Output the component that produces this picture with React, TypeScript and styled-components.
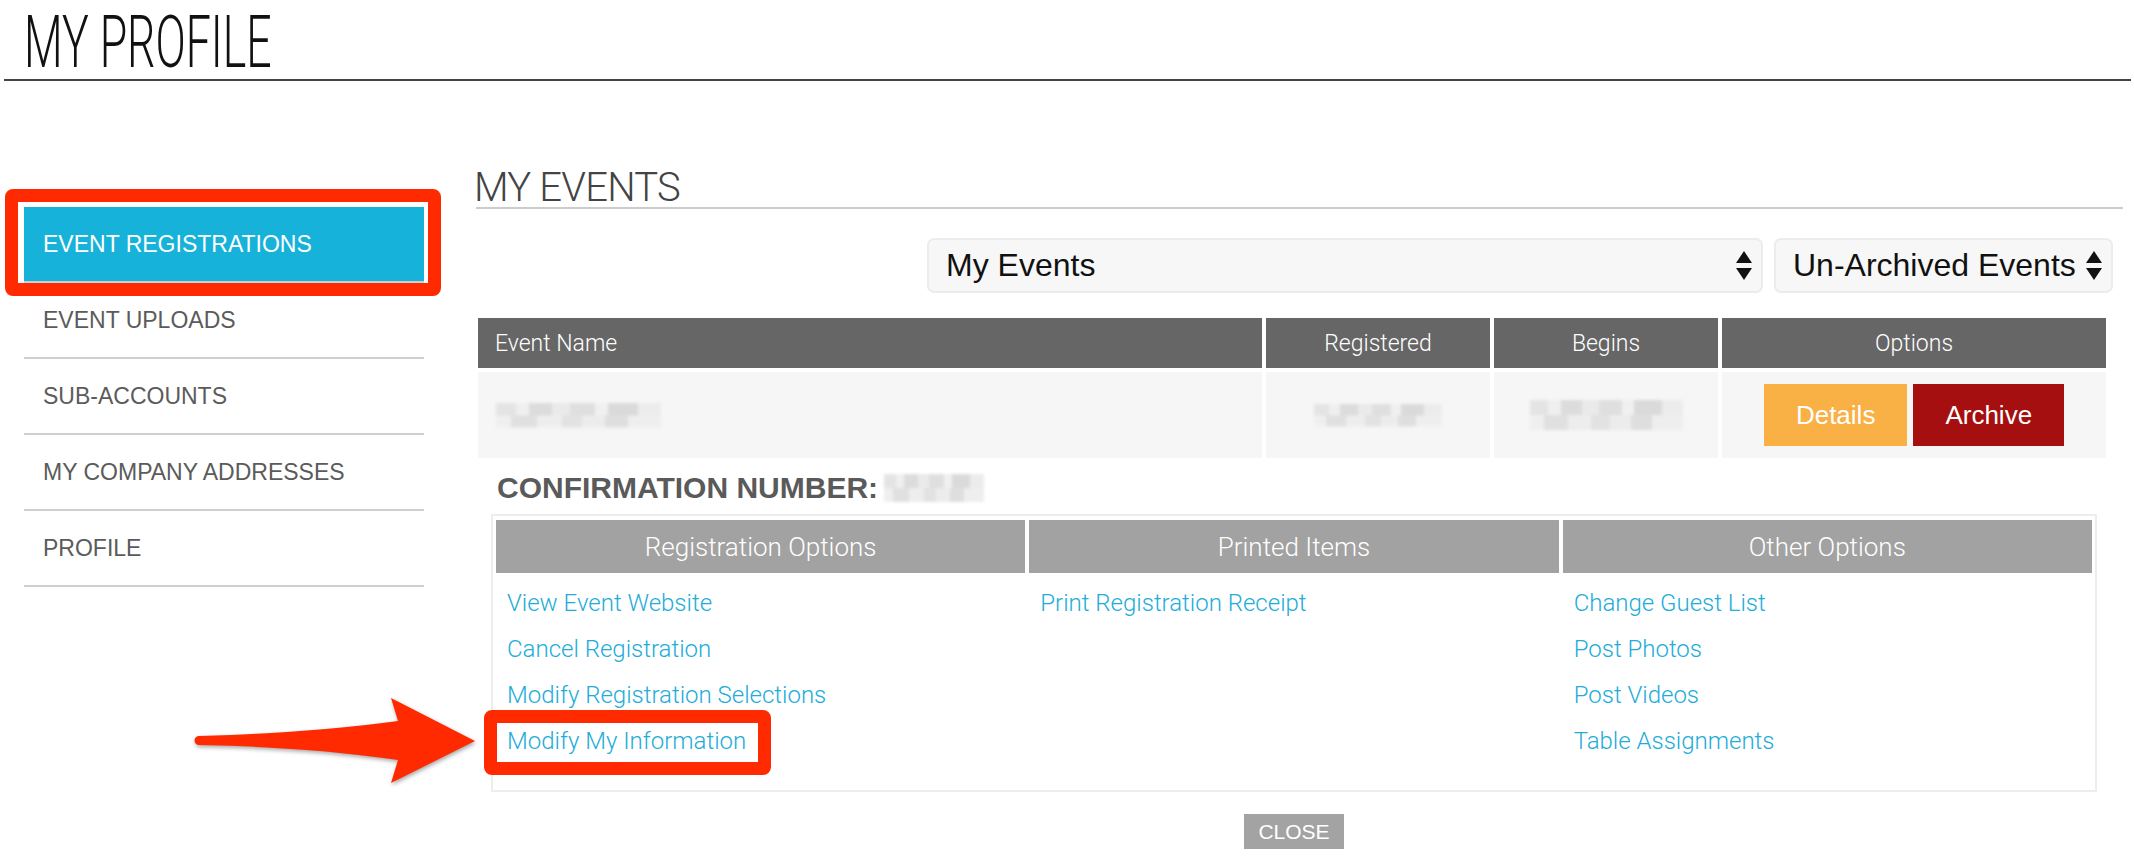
import React from "react";
import styled, { createGlobalStyle } from "styled-components";

const GlobalStyle = createGlobalStyle`
  html, body {
    margin: 0;
    padding: 0;
    background: #fff;
  }
  body {
    font-family: "Liberation Sans", Arial, sans-serif;
    color: #333;
  }
  * {
    box-sizing: border-box;
  }
`;

const Page = styled.div`
  position: relative;
  width: 2134px;
  min-height: 860px;
  overflow: hidden;
`;

const PageTitle = styled.h1`
  margin: 0 3px 0 4px;
  height: 81px;
  padding: 7px 0 0 20px;
  border-bottom: 2px solid #444;
  font-family: Roboto, "Liberation Sans", sans-serif;
  font-weight: 300;
  font-size: 72px;
  line-height: 72px;
  color: #111;
  white-space: nowrap;
`;

const TitleText = styled.span`
  display: inline-block;
  transform: scaleX(0.62);
  transform-origin: left center;
`;

const Layout = styled.div`
  display: flex;
  align-items: flex-start;
  padding-left: 24px;
`;

const Sidebar = styled.nav`
  flex-shrink: 0;
  width: 400px;
  margin-top: 126px;
`;

const MenuItem = styled.div<{ $active?: boolean }>`
  position: relative;
  display: flex;
  align-items: center;
  height: 76px;
  padding-left: 19px;
  border-bottom: 2px solid #cfcfcf;
  background: ${(p) => (p.$active ? "#16b2d9" : "transparent")};
  color: ${(p) => (p.$active ? "#fff" : "#5b5b5b")};
  font-size: 23px;
  text-transform: uppercase;
  white-space: nowrap;
`;

// red annotation frame drawn over an element
const Callout = styled.span<{ $inset: string }>`
  position: absolute;
  inset: ${(p) => p.$inset};
  border: 13px solid #ff2a00;
  border-radius: 8px;
  pointer-events: none;
`;

const Main = styled.main`
  width: 1647px;
  margin-left: 52px;
`;

const SectionTitle = styled.h2`
  margin: 88px 0 0;
  padding-left: 0;
  border-bottom: 2px solid #cccccc;
  font-family: Roboto, "Liberation Sans", sans-serif;
  font-weight: 300;
  font-size: 40px;
  line-height: 38px;
  letter-spacing: -0.8px;
  color: #444;
  text-indent: -2px;
`;

const Filters = styled.div`
  display: flex;
  justify-content: flex-end;
  gap: 11px;
  margin-top: 29px;
  padding-right: 10px;
`;

const SelectBox = styled.div<{ $width: number }>`
  display: flex;
  align-items: center;
  justify-content: space-between;
  width: ${(p) => p.$width}px;
  height: 55px;
  padding: 0 9px 0 17px;
  background: #f7f7f7;
  border: 2px solid #ececec;
  border-radius: 7px;
  font-size: 32px;
  color: #111;
  white-space: nowrap;
`;

const EventTable = styled.div`
  display: grid;
  grid-template-columns: 784px 224px 224px 384px;
  gap: 4px;
  margin: 25px 0 0 2px;
`;

const HeadCell = styled.div<{ $center?: boolean }>`
  display: flex;
  align-items: center;
  justify-content: ${(p) => (p.$center ? "center" : "flex-start")};
  height: 50px;
  padding-left: ${(p) => (p.$center ? 0 : 17)}px;
  background: #666666;
  color: #fff;
  font-family: Roboto, "Liberation Sans", sans-serif;
  font-weight: 300;
  font-size: 23px;
`;

const BodyCell = styled.div<{ $center?: boolean }>`
  display: flex;
  align-items: center;
  justify-content: ${(p) => (p.$center ? "center" : "flex-start")};
  gap: 6px;
  height: 86px;
  padding-left: ${(p) => (p.$center ? 0 : 18)}px;
  background: #f6f6f6;
`;

const ActionButton = styled.button<{ $tone: "amber" | "red" }>`
  height: 62px;
  padding: 0 32px;
  border: 0;
  background: ${(p) => (p.$tone === "amber" ? "#f9b044" : "#a50f10")};
  color: #fff;
  font-family: "Liberation Sans", Arial, sans-serif;
  font-size: 26px;
  cursor: pointer;
`;

// pixelated placeholder for blurred-out personal data
const Redacted = styled.span<{ $w: number; $h: number }>`
  display: inline-block;
  width: ${(p) => p.$w}px;
  height: ${(p) => p.$h}px;
  background-image:
    linear-gradient(90deg, #e4e4e4 0 12%, #efefef 12% 20%, #dcdcdc 20% 34%, #eaeaea 34% 45%, #dfdfdf 45% 60%, #f0f0f0 60% 68%, #dadada 68% 86%, #ececec 86%),
    linear-gradient(90deg, #efefef 0 9%, #e0e0e0 9% 25%, #ededed 25% 40%, #e2e2e2 40% 52%, #ececec 52% 66%, #dedede 66% 80%, #eeeeee 80%);
  background-size: 100% 50%;
  background-position: top, bottom;
  background-repeat: no-repeat;
  filter: blur(1.6px);
`;

const Confirmation = styled.div`
  display: flex;
  align-items: center;
  gap: 6px;
  margin: 12px 0 0 21px;
  font-size: 30px;
  line-height: 36px;
  font-weight: bold;
  color: #5a5a5a;
`;

const OptionsPanel = styled.div`
  display: grid;
  grid-template-columns: repeat(3, 1fr);
  column-gap: 4px;
  margin: 8px 26px 0 15px;
  padding: 4px 3px 26px;
  border: 2px solid #ededed;
`;

const OptionColumn = styled.div`
  display: flex;
  flex-direction: column;
`;

const OptionHeader = styled.div`
  display: flex;
  align-items: center;
  justify-content: center;
  height: 53px;
  background: #a2a2a2;
  color: #fff;
  font-family: Roboto, "Liberation Sans", sans-serif;
  font-weight: 300;
  font-size: 26px;
`;

const LinkList = styled.div`
  display: flex;
  flex-direction: column;
  align-items: flex-start;
  padding: 7px 0 0 11px;
`;

const OptionLink = styled.a`
  display: inline-block;
  color: #22acd9;
  font-family: Roboto, "Liberation Sans", sans-serif;
  font-weight: 300;
  font-size: 24px;
  line-height: 46px;
  text-decoration: none;
  white-space: nowrap;
`;

const Highlight = styled.span`
  position: relative;
  display: inline-block;
`;

const Arrow = styled.svg`
  position: absolute;
  left: -317px;
  top: -28px;
  width: 290px;
  height: 100px;
  overflow: visible;
  filter: drop-shadow(1px 2px 2px rgba(0, 0, 0, 0.35));
  pointer-events: none;
`;

const CloseRow = styled.div`
  display: flex;
  justify-content: center;
  margin: 22px 26px 0 15px;
`;

const CloseButton = styled.button`
  height: 35px;
  padding: 0 14px;
  border: 0;
  background: #a3a3a3;
  color: #fff;
  font-family: "Liberation Sans", Arial, sans-serif;
  font-size: 21px;
  text-transform: uppercase;
`;

const SortIcon = () => (
  <svg width="16" height="30" viewBox="0 0 16 30">
    <polygon points="8,0 16,12 0,12" fill="#111" />
    <polygon points="0,17 16,17 8,29" fill="#111" />
  </svg>
);

const menu = ["Event Registrations", "Event Uploads", "Sub-Accounts", "My Company Addresses", "Profile"];

const columns = [
  { title: "Registration Options", links: ["View Event Website", "Cancel Registration", "Modify Registration Selections", "Modify My Information"] },
  { title: "Printed Items", links: ["Print Registration Receipt"] },
  { title: "Other Options", links: ["Change Guest List", "Post Photos", "Post Videos", "Table Assignments"] },
];

export default function App() {
  return (
    <Page>
      <GlobalStyle />
      <PageTitle>
        <TitleText>MY PROFILE</TitleText>
      </PageTitle>
      <Layout>
        <Sidebar>
          {menu.map((item, i) => (
            <MenuItem key={item} $active={i === 0}>
              {item}
              {i === 0 && <Callout $inset="-18px -17px -15px -19px" />}
            </MenuItem>
          ))}
        </Sidebar>
        <Main>
          <SectionTitle>MY EVENTS</SectionTitle>
          <Filters>
            <SelectBox $width={836}>
              My Events
              <SortIcon />
            </SelectBox>
            <SelectBox $width={339}>
              Un-Archived Events
              <SortIcon />
            </SelectBox>
          </Filters>
          <EventTable>
            <HeadCell>Event Name</HeadCell>
            <HeadCell $center>Registered</HeadCell>
            <HeadCell $center>Begins</HeadCell>
            <HeadCell $center>Options</HeadCell>
            <BodyCell>
              <Redacted $w={165} $h={25} />
            </BodyCell>
            <BodyCell $center>
              <Redacted $w={128} $h={23} />
            </BodyCell>
            <BodyCell $center>
              <Redacted $w={153} $h={30} />
            </BodyCell>
            <BodyCell $center>
              <ActionButton $tone="amber">Details</ActionButton>
              <ActionButton $tone="red">Archive</ActionButton>
            </BodyCell>
          </EventTable>
          <Confirmation>
            CONFIRMATION NUMBER:
            <Redacted $w={100} $h={28} />
          </Confirmation>
          <OptionsPanel>
            {columns.map((col) => (
              <OptionColumn key={col.title}>
                <OptionHeader>{col.title}</OptionHeader>
                <LinkList>
                  {col.links.map((link) =>
                    link === "Modify My Information" ? (
                      <Highlight key={link}>
                        <OptionLink href="#">{link}</OptionLink>
                        <Callout $inset="-8px -25px -11px -23px" />
                        <Arrow viewBox="0 0 290 100">
                          <path
                            d="M9,46 Q120,43 208,31 L201,8 L285,51 L201,93 L208,70 Q120,57 9,55 A4.5,4.5 0 0 1 9,46 Z"
                            fill="#ff2a00"
                          />
                        </Arrow>
                      </Highlight>
                    ) : (
                      <OptionLink key={link} href="#">
                        {link}
                      </OptionLink>
                    )
                  )}
                </LinkList>
              </OptionColumn>
            ))}
          </OptionsPanel>
          <CloseRow>
            <CloseButton>Close</CloseButton>
          </CloseRow>
        </Main>
      </Layout>
    </Page>
  );
}
